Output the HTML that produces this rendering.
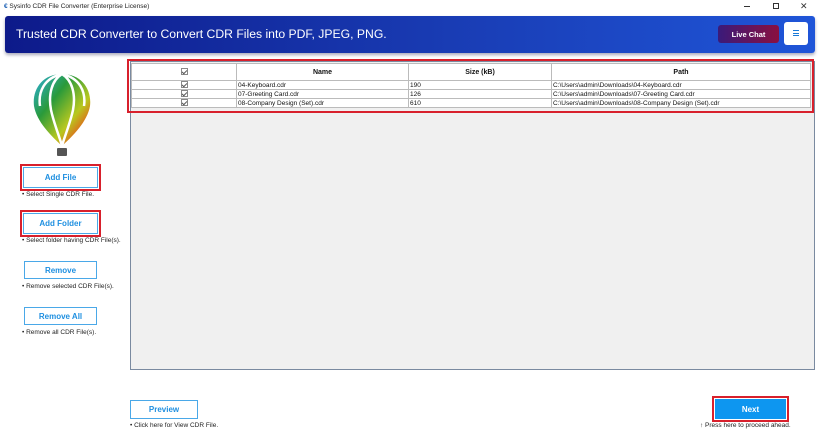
<!DOCTYPE html>
<html><head><style>
*{margin:0;padding:0;box-sizing:border-box}
body{width:820px;height:437px;background:#fff;font-family:"Liberation Sans",Arial,sans-serif;position:relative;overflow:hidden}
.a{position:absolute}
.btn{position:absolute;background:#fff;border:1px solid #4aa8e8;color:#1e8fe0;font-weight:bold;font-size:8px;display:flex;align-items:center;justify-content:center}
.red{outline:2px solid #d8202c;outline-offset:1px}
.note{position:absolute;font-size:6.5px;color:#222}
table{border-collapse:collapse;font-size:6.5px;color:#111}
td{border:1px solid #bbb;height:9px;padding:0 1px;background:#fff}
th{border:1px solid #bbb;height:17px;background:#fff;font-size:7px}
.cb{display:inline-block;width:7px;height:7px;border:1px solid #888;position:relative;vertical-align:middle}
.cb:after{content:"";position:absolute;left:1.5px;top:0;width:2px;height:4px;border:solid #555;border-width:0 1px 1px 0;transform:rotate(45deg)}
</style></head><body>
<div class="a" style="left:4px;top:3px;font-size:6.5px;color:#222"><span style="color:#1a5fb4;font-weight:bold">€</span> Sysinfo CDR File Converter (Enterprise License)</div>
<div class="a" style="left:744px;top:6px;width:6px;height:1px;background:#333"></div>
<div class="a" style="left:773px;top:3px;width:6px;height:6px;border:1px solid #333"></div>
<div class="a" style="left:800px;top:1px;font-size:9px;color:#333">✕</div>
<div class="a" style="left:5px;top:16px;width:810px;height:37px;border-radius:3px;background:linear-gradient(90deg,#0d1a8a,#1a3fb8 60%,#1f55d8);box-shadow:0 2px 3px #aab"></div>
<div class="a" style="left:16px;top:27px;font-size:12.2px;color:#fff">Trusted CDR Converter to Convert CDR Files into PDF, JPEG, PNG.</div>
<div class="a" style="left:718px;top:25px;width:61px;height:18px;border-radius:3px;background:linear-gradient(90deg,#3a1a7a,#8a1040);color:#fff;font-size:7.5px;font-weight:bold;display:flex;align-items:center;justify-content:center">Live Chat</div>
<div class="a" style="left:784px;top:22px;width:24px;height:23px;border-radius:3px;background:#fff"></div>
<div class="a" style="left:793px;top:30px;width:6px;height:6px;border-top:1px solid #1a7ad8;border-bottom:1px solid #1a7ad8"></div>
<div class="a" style="left:793px;top:32.5px;width:6px;height:1px;background:#1a7ad8"></div>
<svg class="a" style="left:30px;top:72px" width="64" height="86" viewBox="0 0 64 86">
<defs><linearGradient id="g" x1="0" y1="0" x2="1" y2="1"><stop offset="0" stop-color="#2bb0e0"/><stop offset=".35" stop-color="#2a9a3a"/><stop offset=".65" stop-color="#b8c820"/><stop offset=".85" stop-color="#e8501a"/><stop offset="1" stop-color="#c01a4a"/></linearGradient></defs>
<path d="M32 2C12 2 2 18 4 34c3 18 22 34 28 40 6-6 25-22 28-40C62 18 52 2 32 2z" fill="url(#g)"/>
<path d="M32 2C22 8 18 22 21 38c3 14 9 28 11 36M32 2c10 6 14 20 11 36-3 14-9 28-11 36M32 2C14 6 8 20 10 34M32 2c18 4 24 18 22 32" stroke="#fff" stroke-width="2.5" fill="none"/>
<rect x="27" y="76" width="10" height="8" rx="1" fill="#555"/></svg>
<div class="btn red" style="left:23px;top:167px;width:75px;height:21px">Add File</div>
<div class="note" style="left:22px;top:191px">• Select Single CDR File.</div>
<div class="btn red" style="left:23px;top:213px;width:75px;height:21px">Add Folder</div>
<div class="note" style="left:22px;top:237px">• Select folder having CDR File(s).</div>
<div class="btn" style="left:24px;top:261px;width:73px;height:18px">Remove</div>
<div class="note" style="left:22px;top:283px">• Remove selected CDR File(s).</div>
<div class="btn" style="left:24px;top:307px;width:73px;height:18px">Remove All</div>
<div class="note" style="left:22px;top:329px">• Remove all CDR File(s).</div>
<div class="a" style="left:130px;top:61px;width:685px;height:309px;background:#f0f0f0;border:1px solid #7a8aa0"></div>
<div class="a red" style="left:129px;top:61px;width:683px;height:50px;outline-offset:0"></div>
<table class="a" style="left:131px;top:63px;width:680px">
<tr><th style="width:105px"><span class="cb"></span></th><th style="width:172px">Name</th><th style="width:143px">Size (kB)</th><th>Path</th></tr>
<tr><td style="text-align:center"><span class="cb"></span></td><td>04-Keyboard.cdr</td><td>190</td><td>C:\Users\admin\Downloads\04-Keyboard.cdr</td></tr>
<tr><td style="text-align:center"><span class="cb"></span></td><td>07-Greeting Card.cdr</td><td>126</td><td>C:\Users\admin\Downloads\07-Greeting Card.cdr</td></tr>
<tr><td style="text-align:center"><span class="cb"></span></td><td>08-Company Design (Set).cdr</td><td>610</td><td>C:\Users\admin\Downloads\08-Company Design (Set).cdr</td></tr>
</table>
<div class="btn" style="left:130px;top:400px;width:68px;height:19px">Preview</div>
<div class="note" style="left:130px;top:422px">• Click here for View CDR File.</div>
<div class="btn red" style="left:715px;top:399px;width:71px;height:20px;background:#0d96f0;color:#fff;border-color:#0d96f0">Next</div>
<div class="note" style="left:700px;top:422px">↑ Press here to proceed ahead.</div>
</body></html>
